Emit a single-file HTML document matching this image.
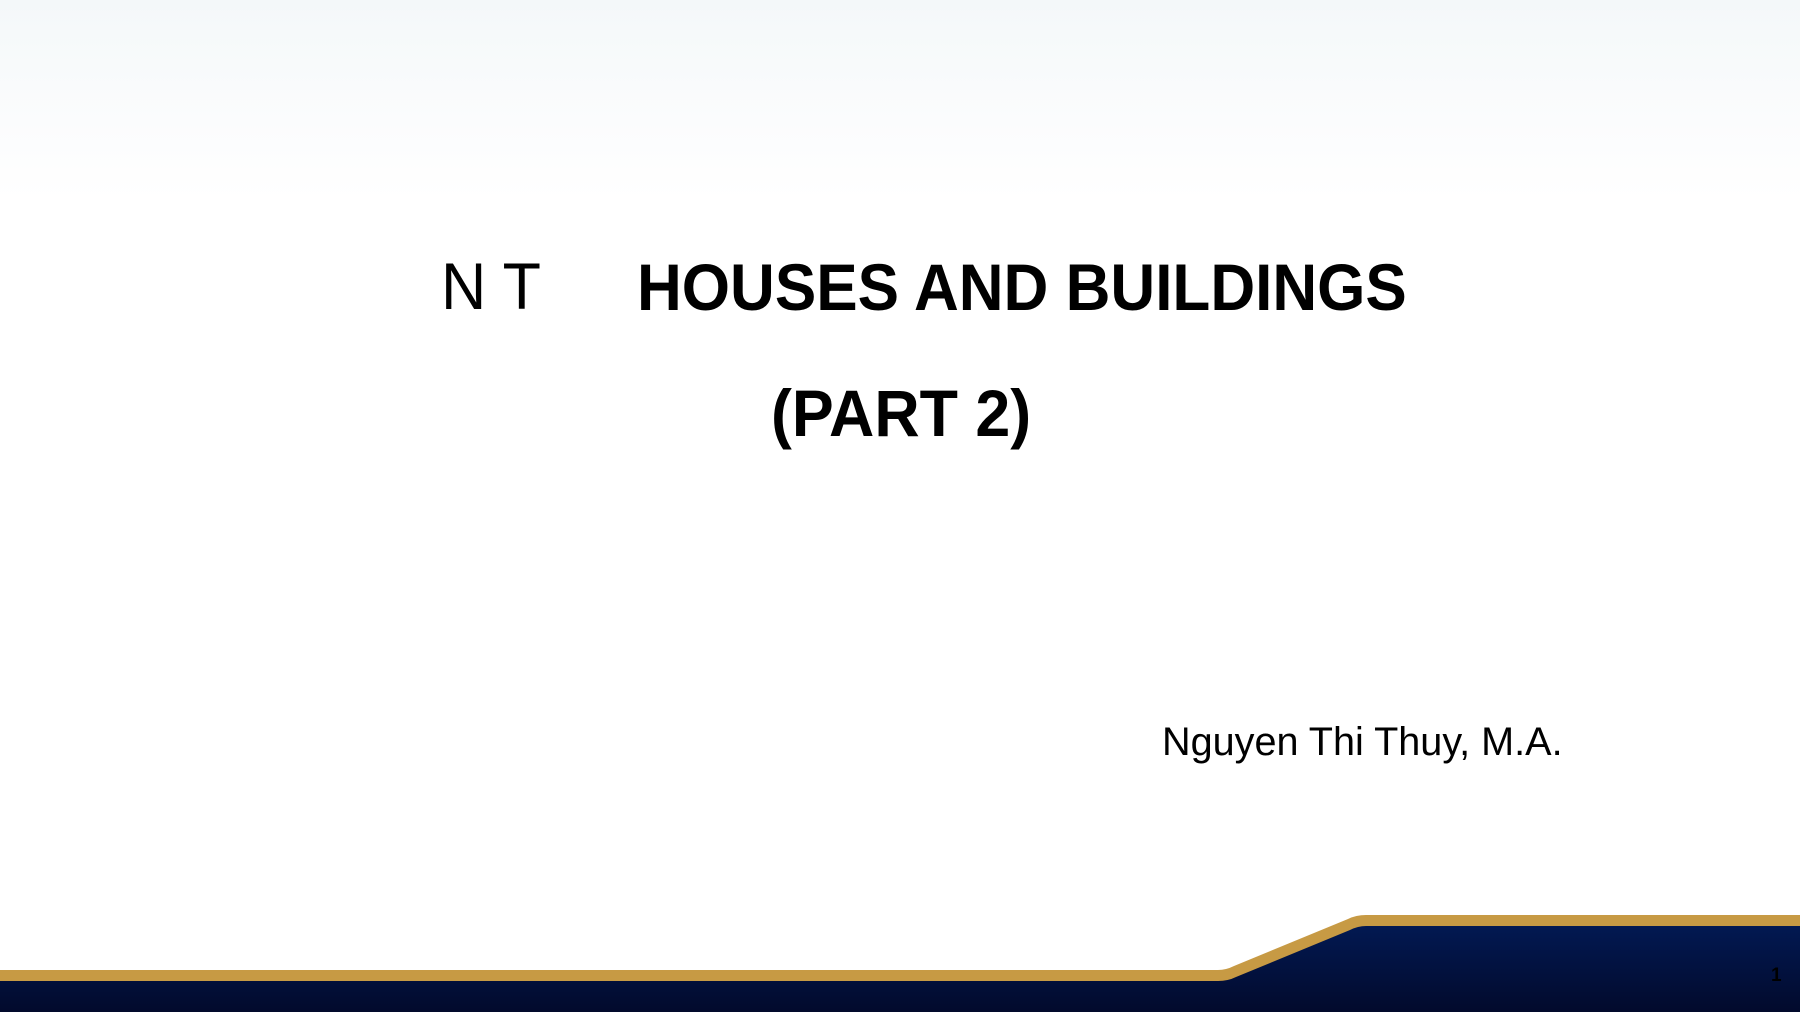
<!DOCTYPE html>
<html><head><meta charset="utf-8"><style>
html,body{margin:0;padding:0}
body{width:1800px;height:1012px;position:relative;overflow:hidden;background:linear-gradient(#f4f8f9 0,#fbfcfd 120px,#fff 200px,#fff 100%);font-family:"Liberation Sans",sans-serif;color:#000}
.t{position:absolute;white-space:nowrap;line-height:1}
</style></head><body>
<div class="t" style="left:441px;top:253px;font-size:66px;transform:scaleX(0.95);transform-origin:left top">N T</div>
<div class="t" style="left:637px;top:254px;font-size:66px;font-weight:bold;transform:scaleX(0.94);transform-origin:left top">HOUSES AND BUILDINGS</div>
<div class="t" style="left:771px;top:380px;font-size:66px;font-weight:bold;transform:scaleX(0.95);transform-origin:left top">(PART 2)</div>
<div class="t" style="left:1162px;top:722px;font-size:40px;transform:scaleX(0.99);transform-origin:left top">Nguyen Thi Thuy, M.A.</div>
<svg style="position:absolute;left:0;top:0" width="1800" height="1012">
<defs><linearGradient id="n" x1="0" y1="0" x2="0" y2="1"><stop offset="0" stop-color="#021a55"/><stop offset="1" stop-color="#020a2c"/></linearGradient></defs>
<path d="M0 974 L1218 974 Q1226 974 1234 970 L1348 923 Q1356 919 1366 919 L1800 919 L1800 1012 L0 1012Z" fill="url(#n)"/>
<path d="M0 970 L1218 970 Q1226 970 1234 966 L1348 919 Q1356 915 1366 915 L1800 915 L1800 926 L1366 926 Q1358 926 1350 930 L1236 977 Q1228 981 1218 981 L0 981Z" fill="#c79a44"/>
</svg>
<div class="t" style="left:1771px;top:966px;font-size:19px;font-weight:bold">1</div>
</body></html>
